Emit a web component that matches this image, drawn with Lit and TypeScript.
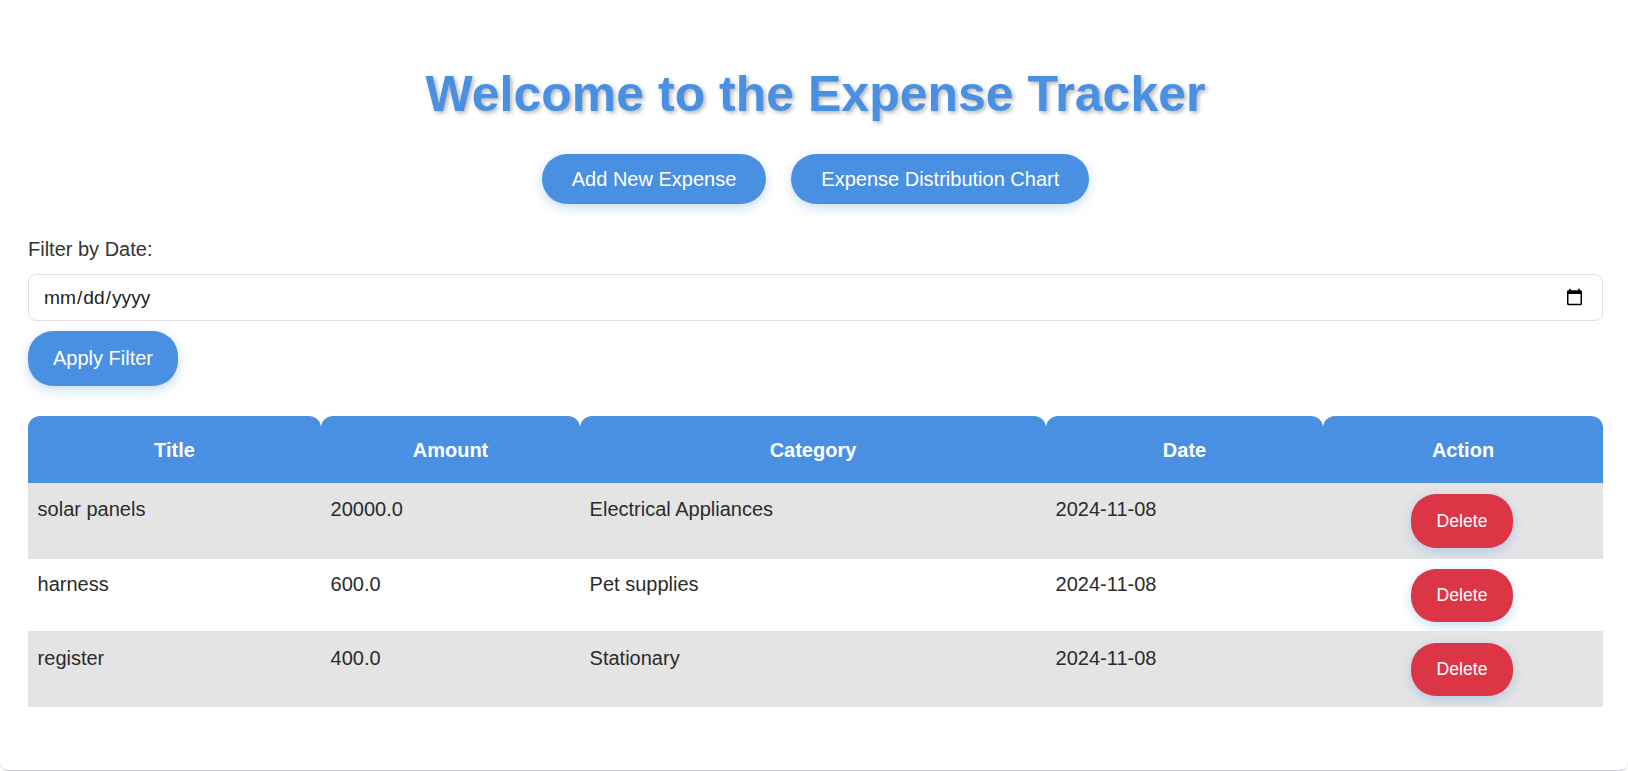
import { LitElement, html, css } from 'lit';
import { customElement } from 'lit/decorators.js';

const expenses = [
  { title: 'solar panels', amount: '20000.0', category: 'Electrical Appliances', date: '2024-11-08' },
  { title: 'harness', amount: '600.0', category: 'Pet supplies', date: '2024-11-08' },
  { title: 'register', amount: '400.0', category: 'Stationary', date: '2024-11-08' },
];

@customElement('app-root')
export class AppRoot extends LitElement {
  static override styles = css`
    :host {
      display: block;
      font-family: 'Liberation Sans', Arial, sans-serif;
      color: #333;
      background: #fff;
      min-height: 771px;
    }

    .container {
      box-sizing: border-box;
      height: 771px;
      padding: 28px 25px 0 28px;
      border-bottom: 1px solid #c8c8d2;
      border-radius: 0 0 8px 8px;
    }

    h1 {
      margin: 39px 0 32px;
      text-align: center;
      font-size: 50px;
      line-height: 55px;
      font-weight: 700;
      color: #4a90e2;
      text-shadow: 2px 2px 4px rgba(0, 0, 0, 0.3);
    }

    .nav {
      display: flex;
      justify-content: center;
      gap: 25px;
      margin-bottom: 34px;
    }

    .btn {
      display: inline-block;
      box-sizing: border-box;
      border: none;
      border-radius: 25px;
      background: #4a90e2;
      color: #fff;
      font-family: inherit;
      font-size: 20px;
      box-shadow: 0 4px 12px rgba(74, 144, 226, 0.3);
    }

    .nav .btn {
      height: 50px;
      padding: 0 30px;
    }

    label {
      display: block;
      font-size: 20px;
      line-height: 23px;
      margin-bottom: 13px;
    }

    input {
      display: block;
      box-sizing: border-box;
      width: 100%;
      height: 47px;
      padding: 0 16px 0 14px;
      border: 1px solid #e0e0e6;
      border-radius: 8px;
      background: #fff;
      color: #222;
      font-family: inherit;
      font-size: 19.2px;
    }

    .apply {
      display: block;
      height: 55px;
      padding: 0 25px;
      margin: 10px 0 30px;
    }

    table {
      width: 100%;
      table-layout: fixed;
      border-collapse: collapse;
      font-size: 20px;
    }

    .col-title { width: 293px; }
    .col-amount { width: 259px; }
    .col-category { width: 466px; }
    .col-date { width: 277px; }
    .col-action { width: 280px; }

    th {
      box-sizing: border-box;
      height: 67px;
      padding: 2px 10px 0;
      background: #4a90e2;
      color: #fff;
      font-size: 20px;
      font-weight: 700;
      text-align: center;
      border-radius: 12px 12px 0 0;
    }

    td {
      padding: 10px 9.6px;
      vertical-align: top;
      color: #2b2b2b;
      line-height: 32px;
      border-bottom: 1px solid #e3e3e8;
    }

    td:last-child {
      padding-right: 11.6px;
    }

    tbody tr:nth-child(odd) td {
      background: #e4e4e5;
    }

    tbody tr:nth-child(2) td {
      padding-top: 9px;
    }

    .delete {
      display: block;
      width: 102px;
      height: 53px;
      margin: 0 auto;
      padding: 0;
      background: #dc3545;
      font-size: 17.6px;
    }

    tbody tr:nth-child(1) .delete {
      height: 54px;
      margin-top: 1px;
    }

    tbody tr:nth-child(2) .delete {
      margin-top: 1px;
      margin-bottom: -1px;
    }

    tbody tr:nth-child(3) .delete {
      margin-top: 1px;
    }
  `;

  override render() {
    return html`
      <div class="container">
        <h1>Welcome to the Expense Tracker</h1>
        <div class="nav">
          <button class="btn">Add New Expense</button>
          <button class="btn">Expense Distribution Chart</button>
        </div>
        <label for="date">Filter by Date:</label>
        <input id="date" type="date" />
        <button class="btn apply">Apply Filter</button>
        <table>
          <colgroup>
            <col class="col-title" />
            <col class="col-amount" />
            <col class="col-category" />
            <col class="col-date" />
            <col class="col-action" />
          </colgroup>
          <thead>
            <tr>
              <th>Title</th>
              <th>Amount</th>
              <th>Category</th>
              <th>Date</th>
              <th>Action</th>
            </tr>
          </thead>
          <tbody>
            ${expenses.map(
              (e) => html`
                <tr>
                  <td>${e.title}</td>
                  <td>${e.amount}</td>
                  <td>${e.category}</td>
                  <td>${e.date}</td>
                  <td><button class="btn delete">Delete</button></td>
                </tr>
              `
            )}
          </tbody>
        </table>
      </div>
    `;
  }
}
